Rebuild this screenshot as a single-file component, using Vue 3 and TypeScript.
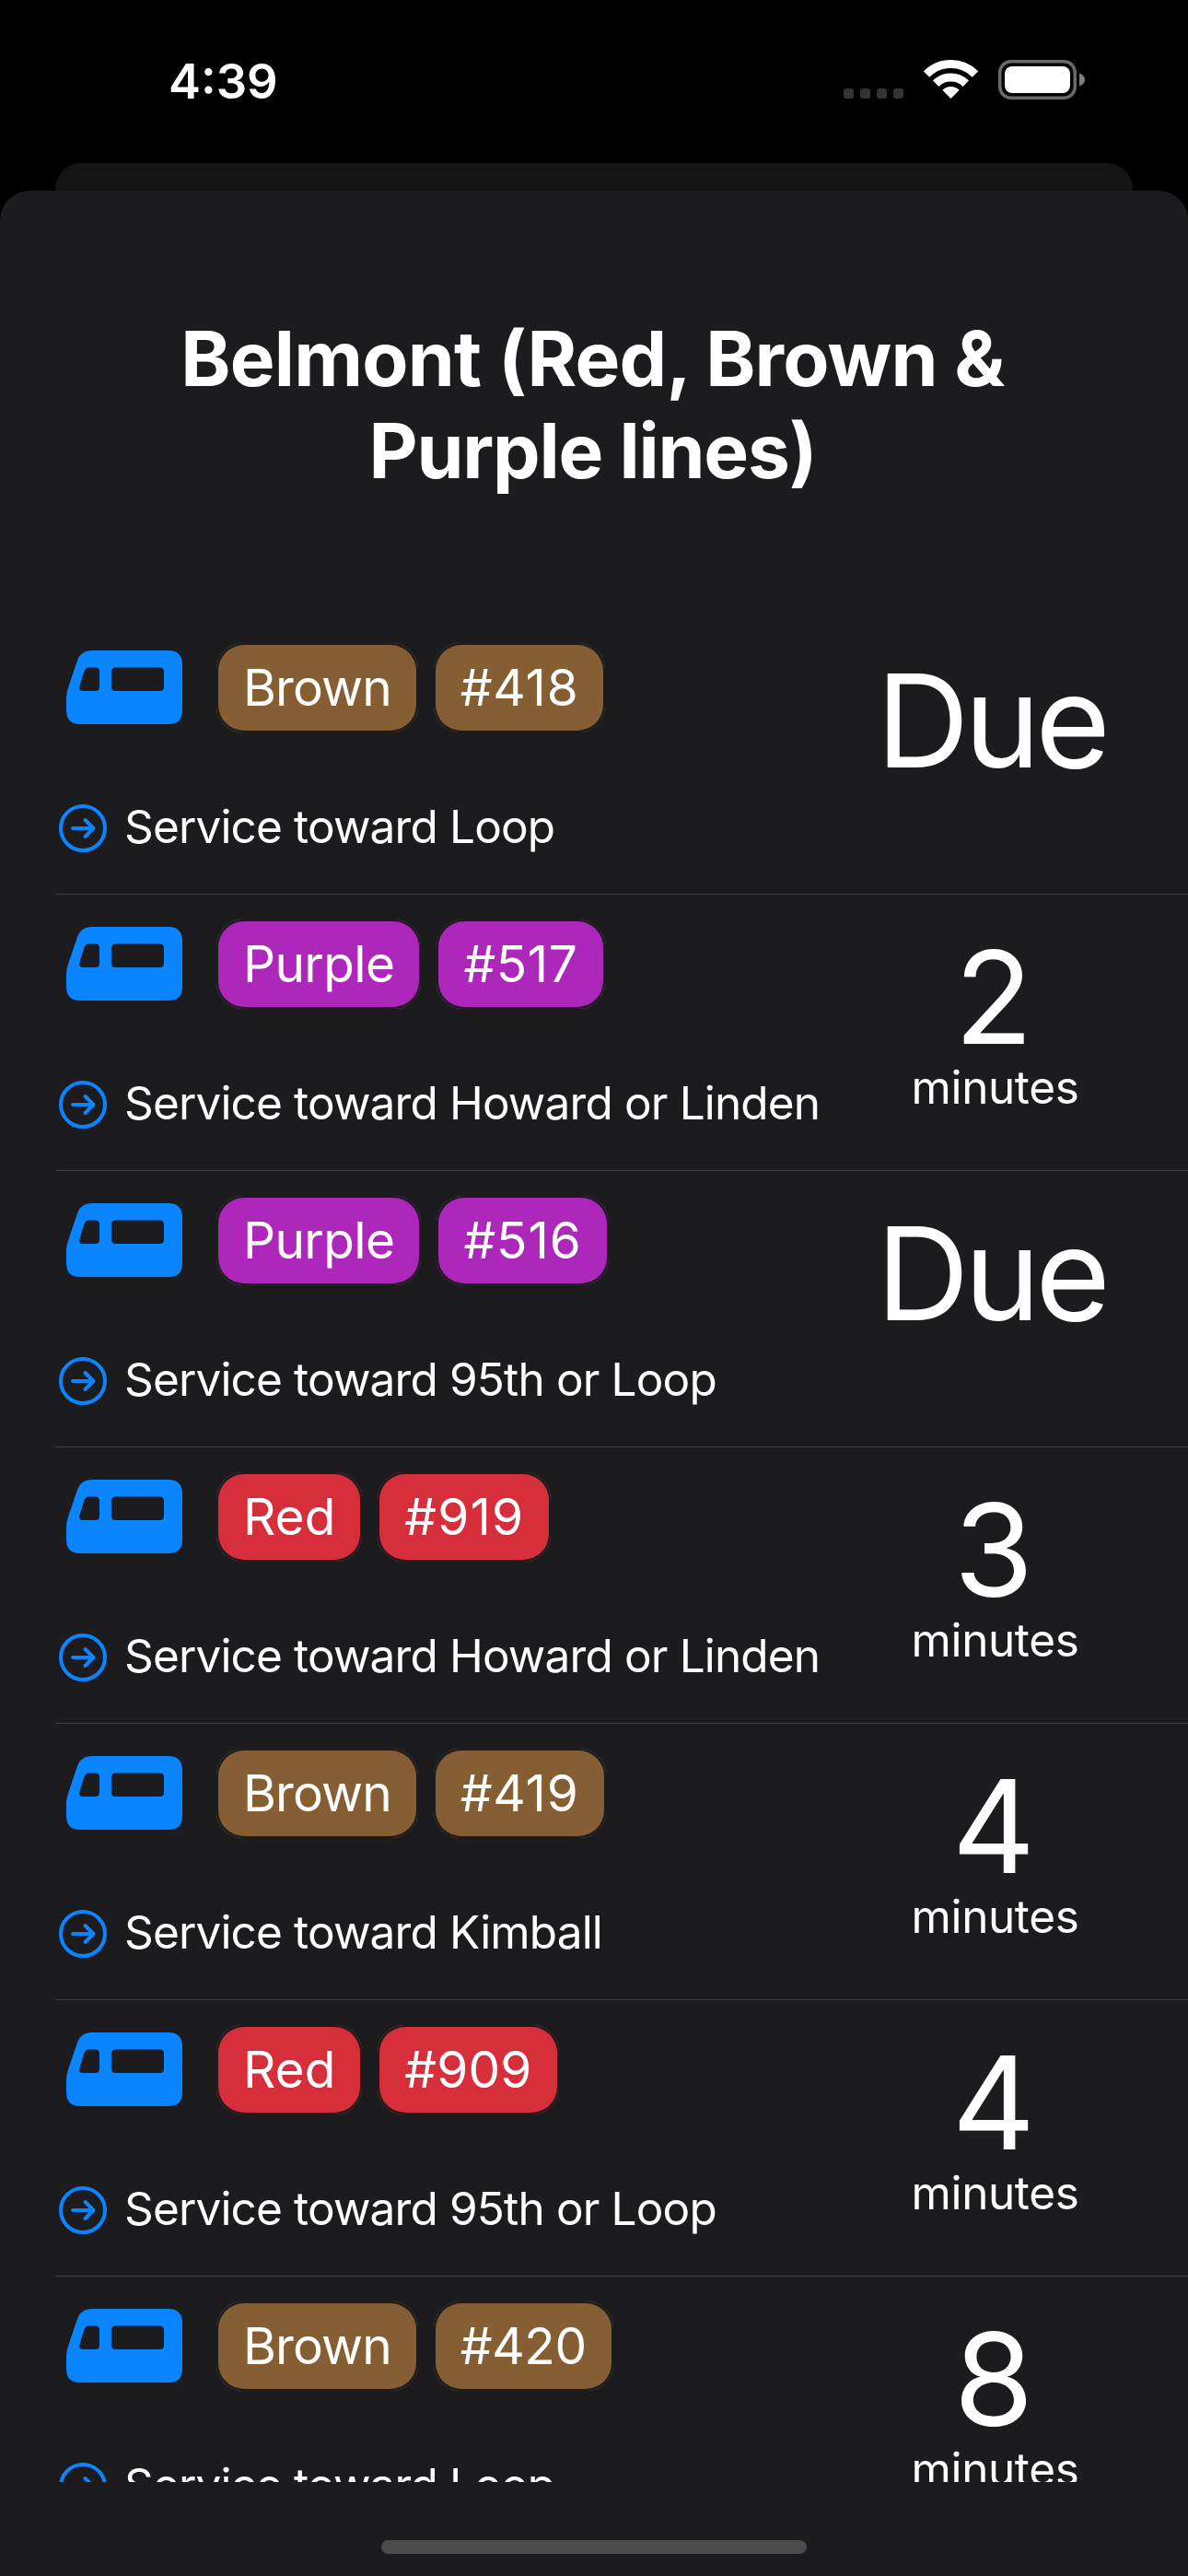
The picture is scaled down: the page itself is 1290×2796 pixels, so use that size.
<script setup lang="ts">
type Line = 'brown' | 'purple' | 'red'

interface Arrival {
  line: Line
  label: string
  run: string
  // letter spacing of the run number, in pixels
  tracking: number
  destination: string
  minutes: number
}

const station = ['Belmont (Red, Brown &', 'Purple lines)']

const arrivals: Arrival[] = [
  { line: 'brown', label: 'Brown', run: '#418', tracking: 0.75, destination: 'Loop', minutes: 0 },
  { line: 'purple', label: 'Purple', run: '#517', tracking: 0.6, destination: 'Howard or Linden', minutes: 2 },
  { line: 'purple', label: 'Purple', run: '#516', tracking: 0.9, destination: '95th or Loop', minutes: 0 },
  { line: 'red', label: 'Red', run: '#919', tracking: 1.1, destination: 'Howard or Linden', minutes: 3 },
  { line: 'brown', label: 'Brown', run: '#419', tracking: 0.75, destination: 'Kimball', minutes: 4 },
  { line: 'red', label: 'Red', run: '#909', tracking: 0.1, destination: '95th or Loop', minutes: 4 },
  { line: 'brown', label: 'Brown', run: '#420', tracking: -0.4, destination: 'Loop', minutes: 8 },
]
</script>

<template>
  <div class="screen">
    <header class="status">
      <span class="clock">4:39</span>
      <div class="indicators">
        <div class="cell"><i v-for="n in 4" :key="n"></i></div>
        <svg class="wifi" width="59" height="43" viewBox="0 0 59 43">
          <path d="M3 15.5A37.5 37.5 0 0 1 56 15.5" fill="none" stroke="#fff" stroke-width="9" />
          <path d="M13.24 25.74A23 23 0 0 1 45.76 25.74" fill="none" stroke="#fff" stroke-width="9" />
          <path d="M29.5 42L20.3 32.8A13 13 0 0 1 38.7 32.8Z" fill="#fff" />
        </svg>
        <svg class="battery" width="95" height="43" viewBox="0 0 95 43">
          <rect x="1.75" y="1.75" width="81.5" height="39.5" rx="12" fill="none" stroke="#6a6a6a" stroke-width="3.5" />
          <rect x="7" y="7" width="71" height="29" rx="8" fill="#fff" />
          <path d="M88 14.5C92 16 94 18.500 94 21.500S92 27 88 28.500Z" fill="#808080" />
        </svg>
      </div>
    </header>

    <div class="back-sheet"></div>
    <main class="sheet">
      <h1 class="title">
        <span v-for="part in station" :key="part">{{ part }}</span>
      </h1>

      <ul class="list">
        <li v-for="a in arrivals" :key="a.run" class="row">
          <div class="info">
            <div class="train-line">
              <svg class="train" width="126" height="80" viewBox="0 0 126 80">
                <path
                  fill="#0a84ff"
                  fill-rule="evenodd"
                  d="M28 0H111C121 0 126 6 126 15V65C126 75 121 80 111 80H15C5 80 0 75 0 65V52C0 47 1 44 2.500 39L12 11C15 3.500 20 0 28 0ZM25 18.500C22 18.500 20.600 19.500 19.600 22L14.500 38.500C13.600 42 14.800 44 18 44H31.500C34.500 44 36 42.500 36 39.500V23C36 20 34.500 18.500 31.500 18.500ZM53.500 18.500C50.500 18.500 49 20 49 23V39.500C49 42.500 50.500 44 53.500 44H101.500C104.500 44 106 42.500 106 39.500V23C106 20 104.500 18.500 101.500 18.500Z"
                />
              </svg>
              <span class="badge name" :class="a.line">{{ a.label }}</span>
              <span class="badge" :class="a.line" :style="{ letterSpacing: a.tracking + 'px' }">{{ a.run }}</span>
            </div>
            <div class="service">
              <svg class="arrow" width="52" height="52" viewBox="0 0 52 52" fill="none" stroke="#0a84ff" stroke-width="4">
                <circle cx="26" cy="26" r="24" />
                <path d="M15 26H37M28.500 17L37.500 26L28.500 35" stroke-linecap="round" stroke-linejoin="round" />
              </svg>
              <span class="destination">Service toward {{ a.destination }}</span>
            </div>
          </div>
          <div class="eta">
            <span v-if="a.minutes === 0" class="count due">Due</span>
            <template v-else>
              <span class="count">{{ a.minutes }}</span>
              <span class="unit">minutes</span>
            </template>
          </div>
        </li>
      </ul>

      <div class="home"></div>
    </main>
  </div>
</template>

<style>
html,
body {
  margin: 0;
  background: #000;
}
</style>

<style scoped>
.screen {
  display: flex;
  flex-direction: column;
  width: 1290px;
  height: 2796px;
  overflow: hidden;
  background: #000;
  color: #fff;
  font-family: Inter, 'Liberation Sans', sans-serif;
}

.status {
  display: flex;
  justify-content: space-between;
  box-sizing: border-box;
  height: 177px;
  padding: 0 111px 0 183px;
}

.clock {
  font-size: 52.5px;
  font-weight: 600;
  line-height: 177px;
}

.indicators {
  display: flex;
  align-items: flex-end;
  height: 108px;
}

.cell {
  display: flex;
  gap: 7px;
  margin: 0 22px 1px 0;
}

.cell i {
  width: 11px;
  height: 11px;
  border-radius: 3px;
  background: #333;
}

.wifi {
  margin-right: 22px;
}

.back-sheet {
  height: 30px;
  margin: 0 60px;
  border-radius: 28px 28px 0 0;
  background: #141414;
}

.sheet {
  display: flex;
  flex: 1;
  flex-direction: column;
  align-items: center;
  border-radius: 32px 32px 0 0;
  background: #1c1c1e;
}

.title {
  display: flex;
  flex-direction: column;
  align-items: center;
  margin: 133px 0 131px;
  padding-right: 3px;
  font-size: 82px;
  font-weight: 700;
  line-height: 100px;
  letter-spacing: -0.8px;
  white-space: nowrap;
}

.title span:last-child {
  letter-spacing: -1.2px;
}

.list {
  align-self: stretch;
  height: 2023px;
  margin: 0;
  padding: 0 0 0 60px;
  overflow: hidden;
  list-style: none;
}

.row {
  display: flex;
  justify-content: space-between;
  box-sizing: border-box;
  height: 300px;
  padding-right: 79px;
  border-bottom: 1px solid #3d3d41;
}

.info {
  display: flex;
  flex-direction: column;
  padding-top: 29px;
}

.train-line {
  display: flex;
  align-items: center;
  height: 93px;
  margin-left: 12px;
}

.train {
  margin: 0 39px 1px 0;
}

.badge {
  position: relative;
  margin-right: 21px;
  padding: 0 27px;
  border-radius: 28px;
  background: var(--line);
  font-size: 55px;
  line-height: 93px;
}

/* faint ring that shows only around the four corners */
.badge::before {
  content: '';
  position: absolute;
  inset: -3px;
  border: 1px solid var(--line);
  border-radius: 31px;
  opacity: 0.3;
  mask:
    linear-gradient(to right, #000 28px, transparent 28px calc(100% - 28px), #000 calc(100% - 28px)),
    linear-gradient(#000 28px, transparent 28px calc(100% - 28px), #000 calc(100% - 28px));
  mask-composite: intersect;
}

.brown {
  --line: #865e33;
}

.purple {
  --line: #ac27ba;
}

.red {
  --line: #d62e3a;
}

.name {
  letter-spacing: -0.65px;
}

.name.brown {
  letter-spacing: -0.9px;
}

.name.red {
  letter-spacing: 0;
}

.service {
  display: flex;
  margin: 74px 0 0 4px;
}

.arrow {
  margin: 6px 19px 0 0;
}

.destination {
  font-size: 49.5px;
  line-height: 60px;
  letter-spacing: -0.85px;
  white-space: nowrap;
}

.eta {
  display: flex;
  flex-direction: column;
  flex: none;
  align-items: center;
  width: 260px;
  padding-top: 43px;
}

.count {
  padding-right: 4px;
  font-size: 140px;
  line-height: 136px;
}

.due {
  padding-right: 10px;
  letter-spacing: -5.500px;
}

.unit {
  padding-right: 1px;
  font-size: 49.5px;
  line-height: 60px;
  letter-spacing: -0.4px;
}

.home {
  width: 462px;
  height: 15px;
  margin-top: 63px;
  border-radius: 8px;
  background: #4b4b4b;
}
</style>
